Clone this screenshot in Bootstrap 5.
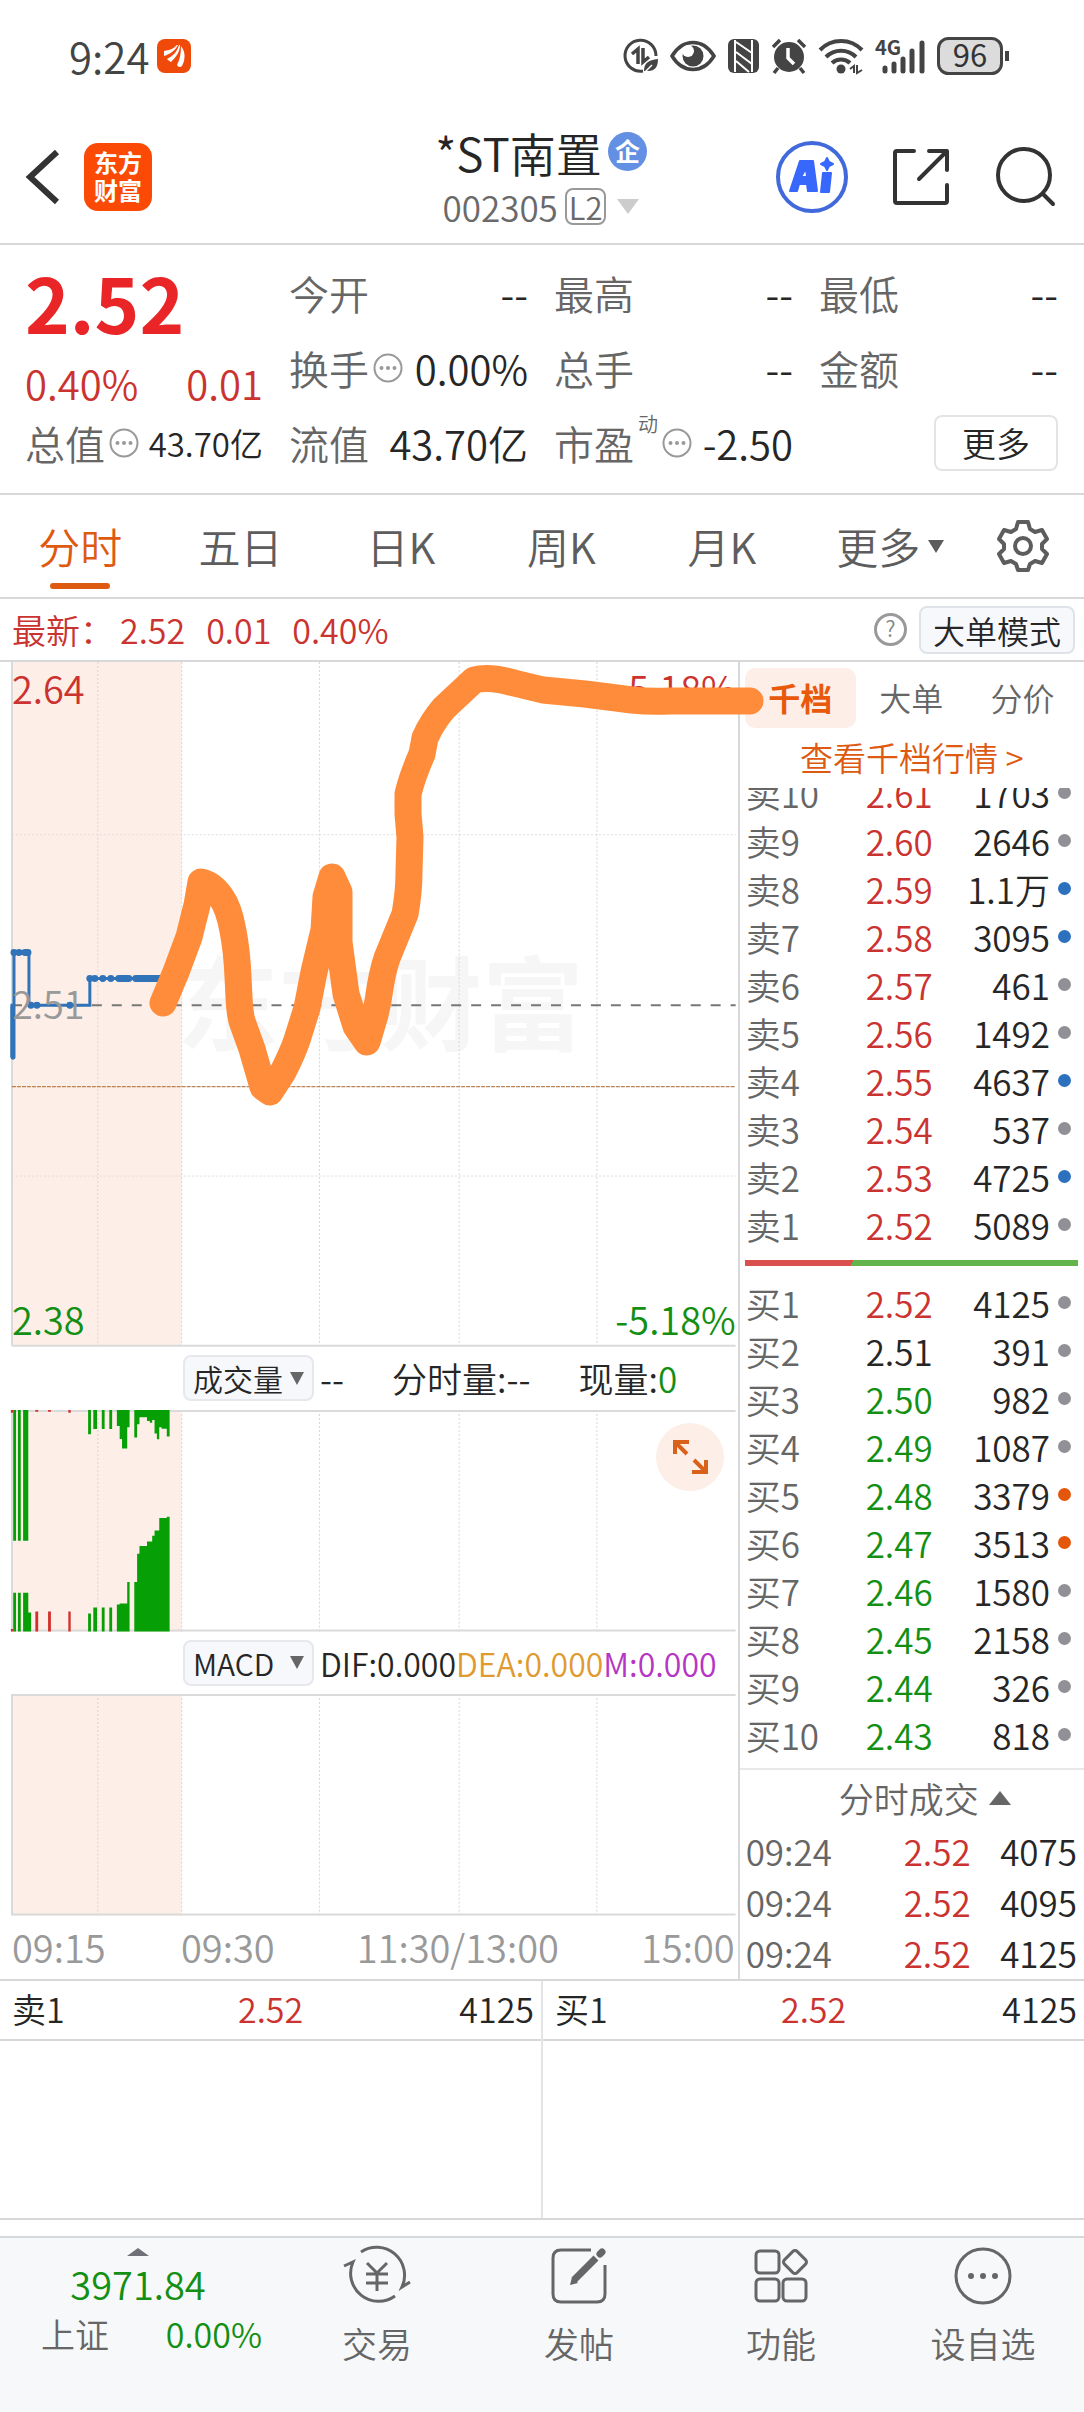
<!DOCTYPE html>
<html lang="zh-CN">
<head>
<meta charset="utf-8">
<meta name="viewport" content="width=device-width, initial-scale=1">
<title>*ST南置 002305</title>
<link href="https://cdn.jsdelivr.net/npm/bootstrap@5.3.0/dist/css/bootstrap.min.css" rel="stylesheet">
<style>
:root{--up:#cb3330;--down:#138f13;--ink:#262626;--soft:#666;--rule:#d6d8da;--brand:#dd5a10;--tint:#fdeee7}
body{font-family:"Noto Sans CJK SC",sans-serif;font-weight:350;color:var(--ink);background:#fff;font-size:35px;line-height:48px}
a{color:inherit;text-decoration:none}
button{font-weight:inherit}
svg{display:block;flex:none;overflow:visible}
svg text{font-family:"Noto Sans CJK SC",sans-serif}
.up{color:var(--up)}.down{color:var(--down)}.soft{color:var(--soft)}
.rule-b{border-bottom:2px solid var(--rule)}
.rule-t{border-top:2px solid var(--rule)}
.plain{border:0;background:none;padding:0;color:inherit}
.statusbar{height:112px;padding:0 73px 0 69px;color:#444;font-size:42px}
.tools{gap:12px}
.topbar{height:133px;padding:0 28px 2px 26px}
.side{flex:1 1 0}
.titles{gap:10px}
.title-line{font-size:46px;line-height:50px;gap:6px}
.code-line{line-height:40px;color:#6a6a6a;gap:7px}
.level{border:2px solid #999;border-radius:8px;font-size:31px;line-height:33px;padding:0 2px}
.actions{gap:44px}
.summary{padding:10px 26px 14px 25px;height:250px;font-size:40px}
.cells{display:grid;grid-template-columns:238px 1fr 1fr 1fr;column-gap:26px;grid-template-rows:75px 75px 75px}
.price-cell{grid-row:span 2}
.price{font-size:76px;line-height:84px;font-weight:700;color:#ea2527}
.minor{font-size:33px}
.tiny{font-size:20px;line-height:20px;margin-top:-38px}
.more-btn{border:2px solid #e4e4e4;border-radius:8px;background:#fff;font-size:34px;line-height:52px;padding:0 26px;color:var(--ink)}
.period{height:104px;font-size:42px;color:#5d5d5d}
.period .nav-item{flex:161 1 0;text-align:center}
.period .nav-item:last-child{flex-grow:122}
.period .nav-link{padding:0;color:inherit;height:102px;display:flex;flex-direction:column;align-items:center;justify-content:center;position:relative}
.period .nav-link.active{color:var(--brand)}
.period .nav-link.active::after{content:"";position:absolute;bottom:8px;width:60px;height:6px;border-radius:3px;background:var(--brand)}
.latest{height:63px;padding:0 9px 0 12px;font-size:34px;gap:6px}
.latest-nums{gap:21px}
.mode-btn{border:2px solid #dfe2e8;border-radius:8px;background:#f6f8fb;font-size:32px;line-height:44px;padding:0 12px;color:var(--ink)}
.board{position:relative}
.charts{flex:739 1 0;min-width:0}
.book{flex:345 1 0;min-width:0;border-left:2px solid var(--rule)}
.sketch{position:absolute;left:0;top:0;width:100%;pointer-events:none}
.pick-row{height:63px;padding-left:183px;gap:6px;font-size:35px;white-space:nowrap}
.pick{border:2px solid #e6e8ec;border-radius:8px;background:#f6f8fb;width:131px;height:46px;font-size:30px;line-height:42px;color:var(--ink);padding:0 8px;flex:none}
.vol-values{gap:48px}
.values{font-size:32px}
.dea{color:#e09a30}.mval{color:#b535c4}
.volume{position:relative}
.expand{position:absolute;right:14px;top:13px}
.axis{height:62px;font-size:38px;line-height:62px;color:#999;padding:0 3px 0 12px;display:grid;grid-template-columns:169px 139px 1fr 139px}
.book-tabs{padding:6px 6px 0 5px}
.book-tabs .nav-link{padding:5px 0 7px;font-size:32px;line-height:48px;color:var(--soft);border-radius:10px}
.book-tabs .nav-link.active{background:var(--tint);color:#e8590c;font-weight:700}
.depth-link{height:60px;font-size:33px;line-height:58px;color:var(--brand)}
.asks{height:462px;overflow:hidden}
.quotes{width:100%;table-layout:fixed}
.quotes td{padding:0;height:48px;line-height:45px;vertical-align:top}
.quotes td:nth-child(1){width:126px;padding-left:6px;color:var(--soft)}
.quotes td:nth-child(2){width:90px}
.quotes td:nth-child(3){text-align:right}
.quotes td:nth-child(4){width:34px;padding-left:8px}
.trades td{height:51px;line-height:50px}
.trades td:nth-child(1){width:164px}
.trades td:nth-child(3){padding-right:7px}
.spot{width:13px;height:13px;border-radius:50%;background:#909096;display:block;margin-top:16px}
.spot-b{background:#2d70bd}.spot-o{background:#e2570c}
.balance{height:6px;margin:10px 6px 14px 5px;background:linear-gradient(115deg,#d9504f 0 32.3%,#62b44b 32.3%)}
.deal-head{height:58px;line-height:54px;margin-top:8px;border-top:2px solid #e8e8e8;gap:10px;padding-left:26px}
.best{font-size:34px}
.best-half{flex:1 1 0}
.best-half+.best-half{border-left:2px solid #e2e4e6}
.best-row{display:grid;grid-template-columns:226px 1fr auto;padding:0 7px 0 12px;line-height:56px;height:60px;border-bottom:2px solid var(--rule)}
.best-blank{height:177px}
.bottom{margin-top:16px;background:#f6f8fa;height:176px;color:var(--soft)}
.index-box{width:276px;flex:none;padding:10px 14px 0 41px}
.index-box svg,.index-val{margin-right:27px;align-self:center}
.index-val{font-size:38px;line-height:44px;padding-top:6px}
.index-name{font-size:34px;line-height:56px}
.dock{flex:1 1 0;padding-top:7px;gap:15px}
.dock-txt{line-height:46px}
</style>
</head>
<body>

<header>
  <div class="statusbar d-flex align-items-center justify-content-between">
    <div class="d-flex align-items-center gap-2">
      <span>9:24</span>
      <svg width="34" height="34" viewBox="0 0 34 34" aria-hidden="true"><rect width="34" height="34" rx="8" fill="#f04a0a"/><g fill="#fff"><path d="M7 17c0-2 0-4 0-5 6-1 9-2 13-6h1c-3 6-8 9-14 11z"/><path d="M10 20c6-3 10-7 12-14h1c0 7-4 12-9 17-2-1-3-2-4-3z"/><path d="M20 26c3-6 4-12 4-19 4 5 4 10 3 15-1 3-2 6-4 6-2 0-2-1-3-2z"/></g></svg>
    </div>
    <div class="tools d-flex align-items-center">
      <svg width="34" height="36" viewBox="0 0 34 36" fill="none" stroke="#444" stroke-width="3"><path d="M32 18a15.500 15.500 0 1 0-13 15"/><path d="M8 16l6-5v15M19 10v14l6-5" stroke-width="3.500"/><path d="M20 33c0-8 4-11 14-12 0 8-3 12-10 12z" fill="#444" stroke="none"/><path d="M19 36l9-9" stroke="#fff" stroke-width="1.500"/></svg>
      <svg width="46" height="36" viewBox="0 0 46 36"><path d="M2 18C13 0 33 0 44 18 33 36 13 36 2 18z" fill="none" stroke="#444" stroke-width="3.500"/><circle cx="23" cy="18" r="10.500" fill="#444"/><circle cx="18" cy="13" r="6" fill="#fff"/></svg>
      <svg width="31" height="34" viewBox="0 0 31 34"><rect width="31" height="34" rx="6" fill="#444"/><path d="M7 1v32M24 1v32M8 3l16 11M8 13l16 12M8 22l13 11" stroke="#fff" stroke-width="2" fill="none"/></svg>
      <svg width="36" height="36" viewBox="0 0 36 36"><circle cx="18" cy="19" r="15" fill="#444"/><path d="M17 10v10l6 6" stroke="#fff" stroke-width="3.500" fill="none"/><path d="M2 9l7-7M34 9l-7-7M7 30l-4 5M29 30l4 5" stroke="#444" stroke-width="3.500"/></svg>
      <svg width="44" height="36" viewBox="0 0 44 36" fill="none" stroke="#444" stroke-width="4"><path d="M1 12a29 29 0 0 1 42 0M7 19a21 21 0 0 1 30 0M13 25a13 13 0 0 1 18 0"/><circle cx="22" cy="31" r="4.500" fill="#444" stroke="none"/><path d="M31 31l4-3v7M38 27v8l5-3" stroke-width="2"/></svg>
      <svg width="50" height="36" viewBox="0 0 50 36" stroke="#444" stroke-width="5" stroke-linecap="round"><text x="0" y="17" font-size="20" font-weight="700" fill="#444" stroke="none">4G</text><path d="M10 30v3M19 26v7M28 21v12M37 13v20M47 5v28" fill="none"/></svg>
      <svg width="74" height="38" viewBox="0 0 74 38"><rect x="1.500" y="1.500" width="63" height="35" rx="10" fill="#dcdcdc" stroke="#444" stroke-width="3"/><path d="M70 14v10" stroke="#444" stroke-width="4"/><text x="33" y="30" font-size="31" font-weight="400" fill="#333" text-anchor="middle">96</text></svg>
    </div>
  </div>

  <div class="topbar rule-b d-flex align-items-center">
    <div class="side d-flex align-items-center">
      <button class="plain" type="button" aria-label="返回"><svg width="34" height="56" viewBox="0 0 34 56"><path d="M31 3L4 28l27 25" fill="none" stroke="#333" stroke-width="6"/></svg></button>
      <svg class="ms-4" width="68" height="68" viewBox="0 0 68 68"><rect width="68" height="68" rx="14" fill="#fb4a05"/><text x="34" y="29" font-size="24" font-weight="700" fill="#fff" text-anchor="middle">东方</text><text x="34" y="57" font-size="24" font-weight="700" fill="#fff" text-anchor="middle">财富</text></svg>
    </div>
    <div class="titles d-flex flex-column align-items-center">
      <div class="title-line d-flex align-items-center"><span>*ST南置</span>
        <svg width="39" height="39" viewBox="0 0 39 39"><circle cx="19.500" cy="19.500" r="19.500" fill="#6490e4"/><text x="19.500" y="29" font-size="25" font-weight="700" fill="#fff" text-anchor="middle">企</text></svg>
      </div>
      <div class="code-line d-flex align-items-center"><span>002305</span><span class="level">L2</span>
        <svg class="ms-1" width="22" height="15" viewBox="0 0 22 15"><path d="M0 0h22L11 15z" fill="#ccc"/></svg>
      </div>
    </div>
    <div class="actions side d-flex align-items-center justify-content-end">
      <button class="plain" type="button" aria-label="AI"><svg width="72" height="72" viewBox="0 0 72 72"><circle cx="36" cy="36" r="34" fill="none" stroke="#4169dc" stroke-width="4"/><g fill="#3868fb" stroke="#3868fb" stroke-width="2" stroke-linejoin="round"><path d="M14 50L24 20h13l4 30h-9l-1-7h-8l-2 7zM25 36h6l-1-9z" fill-rule="evenodd"/><path d="M47 32h8l-2 19h-8z"/><path d="M51 17l2 4 4 2-4 2-2 4-2-4-4-2 4-2z"/></g></svg></button>
      <button class="plain" type="button" aria-label="分享"><svg width="58" height="58" viewBox="0 0 58 58" fill="none" stroke="#333" stroke-width="4" stroke-linecap="round" stroke-linejoin="round"><path d="M22 3H5q-2 0-2 2v48q0 2 2 2h48q2 0 2-2V37M37 3h18v19M54 4L27 31"/></svg></button>
      <button class="plain" type="button" aria-label="搜索"><svg width="62" height="62" viewBox="0 0 62 62" fill="none" stroke="#333" stroke-width="4" stroke-linecap="round"><circle cx="30" cy="29" r="26"/><path d="M49 48l10 10"/></svg></button>
    </div>
  </div>
</header>

<section class="summary rule-b">
  <div class="cells align-items-center">
    <div class="price-cell align-self-start">
      <div class="price mt-1">2.52</div>
      <div class="up d-flex justify-content-between mt-3"><span>0.40%</span><span>0.01</span></div>
    </div>
    <div class="d-flex justify-content-between"><span class="soft">今开</span><span>--</span></div>
    <div class="d-flex justify-content-between"><span class="soft">最高</span><span>--</span></div>
    <div class="d-flex justify-content-between"><span class="soft">最低</span><span>--</span></div>
    <div class="d-flex justify-content-between align-items-center"><span class="soft d-flex align-items-center">换手<svg class="ms-1" width="30" height="30"><use href="#dots"/></svg></span><span>0.00%</span></div>
    <div class="d-flex justify-content-between"><span class="soft">总手</span><span>--</span></div>
    <div class="d-flex justify-content-between"><span class="soft">金额</span><span>--</span></div>
    <div class="d-flex justify-content-between align-items-center"><span class="soft d-flex align-items-center">总值<svg class="ms-1" width="30" height="30"><use href="#dots"/></svg></span><span class="minor">43.70亿</span></div>
    <div class="d-flex justify-content-between"><span class="soft">流值</span><span>43.70亿</span></div>
    <div class="d-flex justify-content-between align-items-center"><span class="soft d-flex align-items-center">市盈<span class="tiny ms-1">动</span><svg class="ms-1" width="30" height="30"><use href="#dots"/></svg></span><span>-2.50</span></div>
    <div class="d-flex justify-content-end"><button class="more-btn" type="button">更多</button></div>
  </div>
</section>

<ul class="period nav flex-nowrap rule-b">
  <li class="nav-item"><a class="nav-link active" href="#">分时</a></li>
  <li class="nav-item"><a class="nav-link" href="#">五日</a></li>
  <li class="nav-item"><a class="nav-link" href="#">日K</a></li>
  <li class="nav-item"><a class="nav-link" href="#">周K</a></li>
  <li class="nav-item"><a class="nav-link" href="#">月K</a></li>
  <li class="nav-item"><a class="nav-link flex-row gap-2 ps-3" href="#">更多<svg width="16" height="13" viewBox="0 0 16 13"><path d="M0 0h16L8 13z" fill="#5d5d5d"/></svg></a></li>
  <li class="nav-item"><a class="nav-link" href="#" aria-label="设置"><svg width="54" height="54" viewBox="0 0 54 54" fill="none" stroke="#5d5d5d" stroke-width="4" stroke-linejoin="round"><path d="M22 3h10l2 7 5 3 7-2 5 9-5 5v5l5 5-5 9-7-2-5 3-2 6H22l-2-6-5-3-7 2-5-9 5-5v-5l-5-5 5-9 7 2 5-3z"/><circle cx="27" cy="27" r="8"/></svg></a></li>
</ul>

<div class="latest rule-b d-flex align-items-center up">
  <span>最新：</span>
  <div class="latest-nums d-flex"><span>2.52</span><span>0.01</span><span>0.40%</span></div>
  <div class="ms-auto d-flex align-items-center gap-2">
    <svg class="me-1" width="33" height="33" viewBox="0 0 33 33"><circle cx="16.500" cy="16.500" r="15" fill="none" stroke="#999" stroke-width="3"/><text x="16.500" y="24" font-size="22" fill="#888" text-anchor="middle">?</text></svg>
    <button class="mode-btn" type="button">大单模式</button>
  </div>
</div>

<main class="board d-flex">
  <div class="charts">
    <svg class="w-100" viewBox="0 0 739 686" role="img" aria-label="分时走势">
      <rect x="12" y="0" width="170" height="685" fill="#fdeee7"/>
      <g font-size="102" font-weight="700" fill="#f6f6f6"><text x="177" y="382">东方财富</text></g>
      <path d="M98 0v685M182 0v685M320 0v685M460 0v685M598 0v685" stroke="#d8d5d3" stroke-width="1" stroke-dasharray="2 2"/>
      <path d="M12 173h725M12 515h725" stroke="#e0dedd" stroke-width="1" stroke-dasharray="2 2"/>
      <path d="M12 0v685M12 685h725" fill="none" stroke="#dadada" stroke-width="2"/>
      <path d="M12 344h725" stroke="#777" stroke-width="2" stroke-dasharray="10 10"/>
      <path d="M12 425.500h725" stroke="#a8642a" stroke-width="1" stroke-dasharray="4 1"/>
      <path d="M12 396v-52h2v-53h15v53h61v-27h73" fill="none" stroke="#3173b8" stroke-width="3"/>
      <path d="M13 396v-50" stroke="#3173b8" stroke-width="5" stroke-linecap="round"/>
      <path d="M14 291h0M19 291h0M25 291h3M31 344h0M37 344h0M70 344h0M90 317h0M95 317h0M103 317h0M111 317h0M119 317h10M136 317h27" stroke="#3173b8" stroke-width="7" stroke-linecap="round"/>
      <g font-size="38">
        <text x="12" y="42" fill="#cb3330">2.64</text><text x="737" y="42" fill="#cb3330" text-anchor="end">5.18%</text>
        <text x="12" y="358" fill="#999">2.51</text>
        <text x="12" y="674" fill="#138f13">2.38</text><text x="737" y="674" fill="#138f13" text-anchor="end">-5.18%</text>
      </g>
    </svg>

    <div class="pick-row d-flex align-items-center">
      <button class="pick d-flex align-items-center justify-content-between" type="button">成交量<svg width="14" height="13" viewBox="0 0 14 13"><path d="M0 0h14L7 13z" fill="#666"/></svg></button>
      <div class="vol-values d-flex"><span>--</span><span>分时量:--</span><span>现量:<span class="down">0</span></span></div>
    </div>

    <div class="volume">
      <svg class="w-100" viewBox="0 0 739 222" role="img" aria-label="成交量">
        <rect x="12" y="0" width="170" height="222" fill="#fdeee7"/>
        <path d="M98 0v222M182 0v222M320 0v222M460 0v222M598 0v222" stroke="#d8d5d3" stroke-width="1" stroke-dasharray="2 2"/>
        <path d="M12 0v222M12 1h725M12 221h725" fill="none" stroke="#dadada" stroke-width="2"/>
        <g transform="scale(.472 .3333)">
          <path fill="#069f06" d="M28 0h6v393h-6zM38 0h6v393h-6zM49 0h11v393h-11zM187 0h6v73h-6zM198 0h8v57h-8zM216 0h6v57h-6zM232 0h6v57h-6zM248 0h6v48h-6zM254 0h5v87h-5zM259 0h11v116h-11zM270 0h5v52h-5zM285 0h6v83h-6zM291 0h5v43h-5zM296 0h16v22h-16zM312 0h6v33h-6zM318 0h5v38h-5zM323 0h5v30h-5zM328 0h5v71h-5zM333 0h5v88h-5zM338 0h5v52h-5zM343 0h11v56h-11zM354 0h6v80h-6z"/>
          <path fill="#069f06" d="M28 666h6v-117h-6zM38 666h6v-117h-6zM49 666h11v-117h-11zM60 666h6v-57h-6zM187 666h6v-54h-6zM198 666h8v-72h-8zM216 666h6v-72h-6zM232 666h6v-72h-6zM248 666h6v-81h-6zM254 666h16v-84h-16zM270 666h5v-149h-5zM285 666h6v-149h-6zM291 666h5v-234h-5zM296 666h16v-257h-16zM312 666h11v-271h-11zM323 666h5v-288h-5zM328 666h10v-304h-10zM338 666h16v-341h-16zM354 666h6v-345h-6z"/>
          <path fill="#d3302c" d="M23 0h5v8h-5zM75 0h6v5h-6zM102 0h6v5h-6zM145 0h5v8h-5zM23 666h5v-8h-5zM75 666h6v-60h-6zM102 666h6v-60h-6zM145 666h5v-60h-5z"/>
        </g>
      </svg>
      <button class="expand plain" type="button" aria-label="全屏"><svg width="68" height="68" viewBox="0 0 68 68" fill="none" stroke="#d9621b" stroke-width="4"><circle cx="34" cy="34" r="34" fill="#fdefe8" stroke="none"/><path d="M19 31V19h14M20 20l11 11M50 37v12H36M49 48L38 37"/></svg></button>
    </div>

    <div class="pick-row d-flex align-items-center">
      <button class="pick d-flex align-items-center justify-content-between" type="button">MACD<svg width="14" height="13" viewBox="0 0 14 13"><path d="M0 0h14L7 13z" fill="#666"/></svg></button>
      <span class="values">DIF:0.000<span class="dea">DEA:0.000</span><span class="mval">M:0.000</span></span>
    </div>

    <svg class="w-100" viewBox="0 0 739 222" role="img" aria-label="MACD">
      <rect x="12" y="0" width="170" height="222" fill="#fdeee7"/>
      <path d="M98 0v222M182 0v222M320 0v222M460 0v222M598 0v222" stroke="#d8d5d3" stroke-width="1" stroke-dasharray="2 2"/>
      <path d="M12 0v222M12 1h725M12 221h725" fill="none" stroke="#dadada" stroke-width="2"/>
    </svg>
    <div class="axis"><span>09:15</span><span>09:30</span><span class="text-center">11:30/13:00</span><span class="text-end">15:00</span></div>
  </div>

  <aside class="book">
    <ul class="book-tabs nav nav-fill flex-nowrap">
      <li class="nav-item"><a class="nav-link active" href="#">千档</a></li>
      <li class="nav-item"><a class="nav-link" href="#">大单</a></li>
      <li class="nav-item"><a class="nav-link" href="#">分价</a></li>
    </ul>
    <a class="depth-link d-block text-center" href="#">查看千档行情 &gt;</a>
    <div class="asks d-flex align-items-end"><table class="quotes"><tbody id="asks"></tbody></table></div>
    <div class="balance"></div>
    <table class="quotes"><tbody id="bids"></tbody></table>
    <div class="deal-head soft d-flex align-items-center justify-content-center">分时成交<svg width="22" height="14" viewBox="0 0 22 14"><path d="M0 14h22L11 0z" fill="#666"/></svg></div>
    <table class="quotes trades"><tbody>
      <tr><td>09:24</td><td class="up">2.52</td><td>4075</td></tr>
      <tr><td>09:24</td><td class="up">2.52</td><td>4095</td></tr>
      <tr><td>09:24</td><td class="up">2.52</td><td>4125</td></tr>
    </tbody></table>
  </aside>

  <svg class="sketch" viewBox="0 0 1084 686" aria-hidden="true"><path d="M163 341L176 310 189 275 197 243Q200 226 201 220 212 222 221 235 229 246 233 269 237 290 238 315L239 335Q240 355 243 362L252 387 263 425 270 430 283 410Q293 390 297 378L307 346 314 310 324 268 326 235 332 215 339 230V280L346 332 356 364 367 380 375 353 378 339Q382 310 387 296L405 252Q409 230 409 210L410 175 408 152V132Q412 115 422 92L425 76Q432 60 444 46L474 18Q490 14 514 21L543 28 585 32 632 38Q650 40 670 39H750" fill="none" stroke="#ff8c3a" stroke-width="27" stroke-linecap="round" stroke-linejoin="round"/></svg>
</main>

<section class="best rule-t rule-b d-flex">
  <div class="best-half"><div class="best-row"><span>卖1</span><span class="up">2.52</span><span>4125</span></div><div class="best-blank"></div></div>
  <div class="best-half"><div class="best-row"><span>买1</span><span class="up">2.52</span><span>4125</span></div><div class="best-blank"></div></div>
</section>

<footer class="bottom rule-t d-flex">
  <a class="index-box d-flex flex-column" href="#">
    <svg width="22" height="8" viewBox="0 0 22 8"><path d="M0 8h22L11 0z" fill="#707078"/></svg>
    <span class="index-val down">3971.84</span>
    <span class="index-name d-flex justify-content-between"><span>上证</span><span class="down">0.00%</span></span>
  </a>
  <a class="dock d-flex flex-column align-items-center" href="#">
    <svg width="66" height="60" viewBox="0 0 66 60" fill="none" stroke="#666" stroke-width="3"><path d="M17 7a28 28 0 0 1 41 35l8-5M51 51A28 28 0 0 1 9 17L0 21"/><path d="M23 18l10 10 10-10M22 29h22M22 38h22M33 28v18"/></svg>
    <span class="dock-txt">交易</span></a>
  <a class="dock d-flex flex-column align-items-center" href="#">
    <svg width="60" height="60" viewBox="0 0 60 60" fill="none" stroke="#666" stroke-width="3"><path d="M42 5H12q-8 0-8 8v36q0 8 8 8h36q8 0 8-8V20"/><path d="M25 35l22-22" stroke-width="7"/><path d="M51 9l2-2" stroke-width="7" stroke-linecap="round"/><path d="M21 40l2-8 6 6z" fill="#666" stroke="none"/></svg>
    <span class="dock-txt">发帖</span></a>
  <a class="dock d-flex flex-column align-items-center" href="#">
    <svg width="56" height="60" viewBox="0 0 56 60" fill="none" stroke="#666" stroke-width="3"><rect x="3" y="6" width="23" height="22" rx="4"/><rect x="3" y="34" width="23" height="22" rx="4"/><rect x="30" y="34" width="23" height="22" rx="4"/><rect x="33" y="8" width="18" height="18" rx="3" transform="rotate(45 42 17)"/></svg>
    <span class="dock-txt">功能</span></a>
  <a class="dock d-flex flex-column align-items-center" href="#">
    <svg width="60" height="60" viewBox="0 0 60 60"><circle cx="30" cy="31" r="27" fill="none" stroke="#666" stroke-width="3"/><g fill="#666"><circle cx="18" cy="31" r="3"/><circle cx="30" cy="31" r="3"/><circle cx="42" cy="31" r="3"/></g></svg>
    <span class="dock-txt">设自选</span></a>
</footer>

<svg width="0" height="0" class="position-absolute"><defs><symbol id="dots" viewBox="0 0 30 30"><circle cx="15" cy="15" r="13.500" fill="none" stroke="#999" stroke-width="2"/><g fill="#999"><circle cx="8.500" cy="15" r="2"/><circle cx="15" cy="15" r="2"/><circle cx="21.500" cy="15" r="2"/></g></symbol></defs></svg>

<script>
const asks=[['卖10','2.61','1703',''],['卖9','2.60','2646',''],['卖8','2.59','1.1万','spot-b'],['卖7','2.58','3095','spot-b'],['卖6','2.57','461',''],['卖5','2.56','1492',''],['卖4','2.55','4637','spot-b'],['卖3','2.54','537',''],['卖2','2.53','4725','spot-b'],['卖1','2.52','5089','']];
const bids=[['买1','2.52','4125',''],['买2','2.51','391',''],['买3','2.50','982',''],['买4','2.49','1087',''],['买5','2.48','3379','spot-o'],['买6','2.47','3513','spot-o'],['买7','2.46','1580',''],['买8','2.45','2158',''],['买9','2.44','326',''],['买10','2.43','818','']];
const tone=p=>p>2.51?'up':p<2.51?'down':'';
const row=([n,p,v,s])=>`<tr><td>${n}</td><td class="${tone(p)}">${p}</td><td>${v}</td><td><span class="spot ${s}"></span></td></tr>`;
document.getElementById('asks').innerHTML=asks.map(row).join('');
document.getElementById('bids').innerHTML=bids.map(row).join('');
</script>
<script src="https://cdn.jsdelivr.net/npm/bootstrap@5.3.0/dist/js/bootstrap.bundle.min.js"></script>
</body>
</html>
